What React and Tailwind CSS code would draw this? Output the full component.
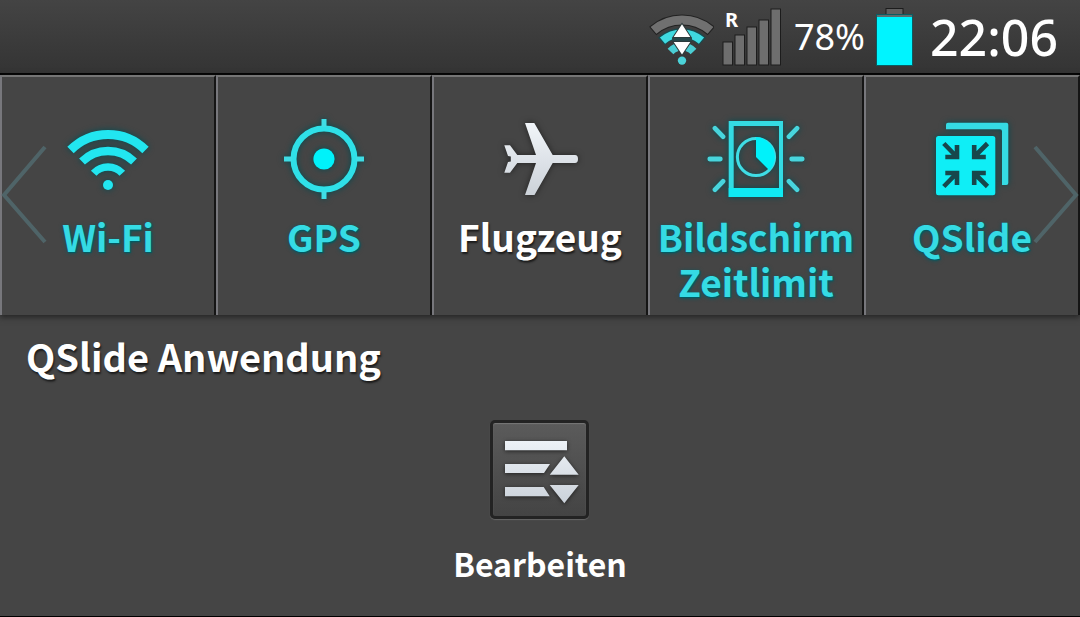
import React from "react";

const WifiIcon = () => (
  <>
    <g fill="none" stroke="#22e6f0">
      <path d="M12.5 31 A53 53 0 0 1 87.5 31" strokeWidth="9" />
      <path d="M24 42.5 A37.4 37.4 0 0 1 76 42.5" strokeWidth="8.4" />
      <path d="M35.7 54.3 A19.4 19.4 0 0 1 64.3 54.3" strokeWidth="7.6" />
    </g>
    <circle cx="50" cy="66" r="5" fill="#22e6f0" />
  </>
);

const GpsIcon = () => (
  <>
    <circle cx="50" cy="40" r="30.5" fill="none" stroke="#2fe0e8" strokeWidth="6" />
    <path d="M50 0 V8 M50 72 V80 M10 40 H18 M82 40 H90" stroke="#3fdde5" strokeWidth="5" />
    <circle cx="50" cy="40" r="10.6" fill="#00f2fa" />
  </>
);

const PlaneIcon = () => (
  <>
    <defs>
      <linearGradient id="plane" x1="0" y1="0" x2="0" y2="1">
        <stop offset="0" stopColor="#f1f5f9" />
        <stop offset="1" stopColor="#ccd2d9" />
      </linearGradient>
    </defs>
    <path
      fill="url(#plane)"
      d="M35 4 H44.3 L62.7 36 H85 Q88 36 88 40 Q88 44 85 44 H62.7 L44.5 76 H35 L46 44 H27.3 L20 53.7 H14.3 L18 43 L20.8 42.4 V37.6 L18 37 L14.3 26.3 H20 L27.3 36 H46 Z"
    />
  </>
);

const TimeoutIcon = () => (
  <>
    <path fill="#34dbe3" fillRule="evenodd" d="M22.7 2 H77 V78 H22.7 Z M27.7 7 V69 H73 V7 Z" />
    <rect x="22.7" y="69" width="54.3" height="9" fill="#0feaf3" />
    <circle cx="50" cy="38" r="18.6" fill="none" stroke="#3fdde5" strokeWidth="3" />
    <path d="M50 18 A20 20 0 0 1 63.5 51.5 L50 38 Z" fill="#00f2fa" />
    <path
      d="M3.8 40 H14.3 M85.7 40 H96.2 M9 9.3 L17 17.7 M91 9.3 L83 17.7 M9 70.7 L17 62.3 M91 70.7 L83 62.3"
      stroke="#48d5dd"
      strokeWidth="4.8"
      strokeLinecap="round"
    />
  </>
);

const QSlideIcon = () => (
  <>
    <path
      fill="#35dbe4"
      d="M24 10.3 V5.7 Q24 3.7 26 3.7 H84.3 Q86.3 3.7 86.3 5.7 V64 Q86.3 66 84.3 66 H80 V12.3 Q80 10.3 78 10.3 Z"
    />
    <rect x="14" y="17" width="59.3" height="59.3" rx="2.5" fill="#0feef6" />
    <g fill="none" stroke="#17474c" strokeWidth="4.6">
      <path d="M35 26 V38 H23.3 M21.8 24.5 L34 37" />
      <path d="M52.2 26 V38 H63.8 M65.5 24.5 L53 37" />
      <path d="M35 66 V54 H23.3 M21.8 67.5 L34 55" />
      <path d="M52.2 66 V54 H63.8 M65.5 67.5 L53 55" />
    </g>
  </>
);

const tiles = [
  { label: "Wi-Fi", Icon: WifiIcon, active: true },
  { label: "GPS", Icon: GpsIcon, active: true },
  { label: "Flugzeug", Icon: PlaneIcon, active: false },
  { label: "Bildschirm Zeitlimit", Icon: TimeoutIcon, active: true },
  { label: "QSlide", Icon: QSlideIcon, active: true },
];

const signalBars = [
  { x: 1, y: 34 },
  { x: 13, y: 27 },
  { x: 25, y: 19 },
  { x: 37, y: 12 },
  { x: 49, y: 1 },
];

const StatusBar = () => (
  <header className="flex h-[75px] items-center justify-end border-b-2 border-black bg-gradient-to-b from-[#444444] to-[#343434] pr-[22px] font-['Noto_Sans',sans-serif] text-white">
    {/* Wi-Fi with traffic arrows */}
    <svg className="mr-2 h-[58px] w-[66px]" viewBox="0 -6 66 58" aria-label="WLAN">
      <g fill="none">
        <path d="M4.7 17 A44.5 44.5 0 0 1 63.3 17" stroke="#222" strokeWidth="11" />
        <path d="M5.5 16.4 A44.5 44.5 0 0 1 62.5 16.4" stroke="#707070" strokeWidth="9" />
        <path d="M13.5 27.4 A30 30 0 0 1 54.5 27.4" stroke="#174b50" strokeWidth="10" />
        <path d="M14.5 26.6 A30 30 0 0 1 53.5 26.6" stroke="#3fd9e0" strokeWidth="8" />
        <path d="M22.5 37.5 A16 16 0 0 1 45.5 37.5" stroke="#4bced4" strokeWidth="8" />
      </g>
      <path d="M34 10.3 L42.3 23 H25.7 Z M25.7 28 H42.3 L34 40.5 Z" fill="#fff" stroke="#2b3a3b" strokeWidth="2" paintOrder="stroke" />
      <rect x="24" y="24" width="20" height="3" fill="#27474a" />
      <circle cx="34" cy="46.6" r="4.2" fill="#4bd2d8" />
    </svg>
    {/* Signal strength */}
    <div className="relative mr-3">
      <svg className="h-[58px] w-[60px]" viewBox="0 0 60 58" aria-label="Signal">
        {signalBars.map((bar) => (
          <rect key={bar.x} x={bar.x} y={bar.y} width="9.5" height={57 - bar.y} fill="#6e6e6e" stroke="#1c1c1c" />
        ))}
      </svg>
      <span className="absolute left-[3px] top-0 text-[20px] font-bold leading-[24px]">R</span>
    </div>
    <span className="mr-[11px] text-[36px] leading-[40px]">78%</span>
    <svg className="mr-[17px] h-[58px] w-[37px]" viewBox="0 0 37 58" aria-label="Akku">
      <rect x="10" y="0.5" width="17" height="8" fill="#606060" stroke="#1c1c1c" />
      <rect x="0.5" y="6.5" width="36" height="51" fill="#00f4ff" stroke="#0b5c61" />
      <rect x="1" y="7" width="35" height="2" fill="#5b6d6e" />
    </svg>
    <time className="text-[50px] font-medium leading-[50px]">22:06</time>
  </header>
);

const Tile = ({ label, Icon, active }) => (
  <button
    type="button"
    className={`flex h-full flex-col items-center gap-[15px] border-l-2 border-r-2 border-t-2 border-l-[#77777c] border-r-[#151515] border-t-[#757575] bg-[#454545] pt-[42px] text-[37px] font-bold leading-[45px] ${
      active
        ? "text-[#35dbe4] [text-shadow:0_1px_4px_#005a62,1px_1px_1px_#005a62]"
        : "text-white [text-shadow:1px_2px_2px_#1a1a1a]"
    }`}
  >
    <svg
      className={`h-[80px] w-[100px] overflow-visible ${
        active ? "drop-shadow-[0_0_3px_#004c52]" : "drop-shadow-[0_0_3px_#222222]"
      }`}
      viewBox="0 0 100 80"
      aria-hidden="true"
    >
      <Icon />
    </svg>
    <span>{label}</span>
  </button>
);

const App = () => {
  return (
    <div className="flex min-h-screen flex-col border-b border-black bg-[#454545] font-['Noto_Sans_CJK_SC','Noto_Sans',sans-serif]">
      <StatusBar />

      {/* Quick settings */}
      <nav className="relative grid min-h-[240px] grid-cols-5 shadow-[0_2px_6px_#222222]">
        {tiles.map((tile) => (
          <Tile key={tile.label} {...tile} />
        ))}
        <button type="button" aria-label="Zurück" className="absolute left-0 top-[69px]">
          <svg className="h-[102px] w-[48px]" viewBox="0 0 48 102" fill="none" stroke="#4f6468" strokeWidth="4">
            <path d="M45 3 L4 51 L45 98" />
          </svg>
        </button>
        <button type="button" aria-label="Weiter" className="absolute right-0 top-[69px]">
          <svg className="h-[102px] w-[48px]" viewBox="0 0 48 102" fill="none" stroke="#4f6468" strokeWidth="4">
            <path d="M3 3 L44 51 L3 98" />
          </svg>
        </button>
      </nav>

      {/* QSlide apps */}
      <main className="flex flex-1 flex-col px-[26px] pt-[18px] text-white [text-shadow:1px_2px_2px_#1a1a1a]">
        <h1 className="text-[38px] font-bold leading-[45px]">QSlide Anwendung</h1>
        <button type="button" className="mt-[42px] flex flex-col items-center gap-[24px] self-center">
          <span className="rounded-[5px] border-[3px] border-[#232323] bg-gradient-to-b from-[#5b5b5b] to-[#444444] shadow-[0_1px_1px_#666666,inset_0_1px_1px_#777777]">
            <svg className="h-[93px] w-[93px]" viewBox="3 3 93 93" aria-hidden="true">
              <defs>
                <linearGradient id="edit" x1="0" y1="0" x2="0" y2="1">
                  <stop offset="0" stopColor="#edf2f7" />
                  <stop offset="1" stopColor="#cbd2da" />
                </linearGradient>
              </defs>
              <path
                className="drop-shadow-[0_1px_2px_#222222]"
                fill="url(#edit)"
                d="M15 21 H77 V30.3 H15 Z M15 44 H60 L54 53 H15 Z M15 67 H53.7 L59.7 76.3 H15 Z M74.3 36.3 L88.7 54.7 H59.7 Z M59.7 65 H88.7 L74.3 83.3 Z"
              />
            </svg>
          </span>
          <span className="text-[32px] font-bold leading-[40px]">Bearbeiten</span>
        </button>
      </main>
    </div>
  );
};

export default App;
